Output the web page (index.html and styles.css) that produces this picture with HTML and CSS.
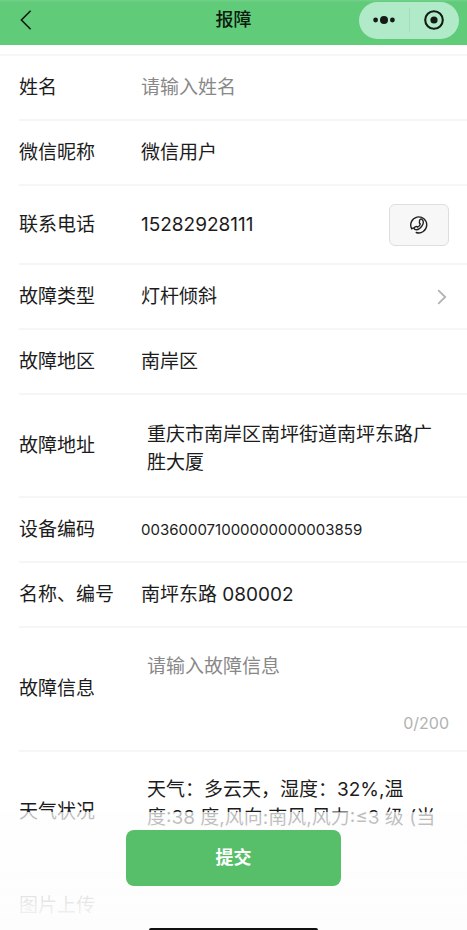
FILE: index.html
```html
<!DOCTYPE html>
<html lang="zh-CN">
<head>
<meta charset="utf-8">
<meta name="viewport" content="width=device-width, initial-scale=1">
<title>报障</title>
<link rel="stylesheet" href="styles.css">
</head>
<body>
<div class="screen">
  <header class="navbar">
    <button class="back" type="button" aria-label="返回">
      <svg width="12" height="20" viewBox="0 0 12 20" fill="none" stroke="#101a13" stroke-width="1.6"><path d="M10.600 .8 1.400 10l9.200 9.200"/></svg>
    </button>
    <h1 class="title">报障</h1>
    <div class="capsule">
      <button class="capsule-button" type="button" aria-label="更多">
        <svg width="24" height="10" viewBox="0 0 24 10" fill="#141a16"><circle cx="3.6" cy="5" r="2.4"/><circle cx="12" cy="5" r="4"/><circle cx="20.4" cy="5" r="2.4"/></svg>
      </button>
      <button class="capsule-button" type="button" aria-label="关闭">
        <svg width="20" height="20" viewBox="0 0 20 20"><circle cx="10" cy="10" r="8.8" fill="none" stroke="#141a16" stroke-width="2.1"/><circle cx="10" cy="10" r="3.6" fill="#141a16"/></svg>
      </button>
    </div>
  </header>

  <form class="form">
    <div class="row">
      <label class="label" for="name">姓名</label>
      <input class="field" id="name" type="text" placeholder="请输入姓名">
    </div>
    <div class="row">
      <label class="label" for="nick">微信昵称</label>
      <input class="field" id="nick" type="text" value="微信用户">
    </div>
    <div class="row row-phone">
      <label class="label" for="phone">联系电话</label>
      <input class="field" id="phone" type="tel" value="15282928111">
      <button class="call" type="button" aria-label="拨打电话">
        <svg width="18" height="18" viewBox="0 0 18 18" fill="none" stroke="#222" stroke-width="1.4" stroke-linecap="round" stroke-linejoin="round"><path d="M1.700 12.700A8 8 0 1 1 6.200 16.500"/><path d="M1.700 12.700 3.800 12"/><path d="M9.600 4.300c.2-1.200 1.600-1.700 2.500-.9 1.500 1.400 1.400 4.100-.1 6.500-1.700 2.700-4.300 4.200-6.600 3.700-1.300-.3-1.700-1.700-.7-2.400l1.200-.6c.7-.3 1.300 0 1.700.6 1.400-.6 2.400-1.900 2.700-3.400-.7-.2-1-.6-.9-1.300z"/></svg>
      </button>
    </div>
    <div class="row">
      <label class="label" for="type">故障类型</label>
      <select class="field" id="type"><option>灯杆倾斜</option></select>
      <svg class="chevron" width="10" height="16" viewBox="0 0 10 16" fill="none" stroke="#b2b2b2" stroke-width="1.8"><path d="M1.200 1.200 8.200 8l-7 6.800"/></svg>
    </div>
    <div class="row">
      <label class="label" for="area">故障地区</label>
      <input class="field" id="area" type="text" value="南岸区">
    </div>
    <div class="row row-address">
      <label class="label" for="address">故障地址</label>
      <textarea class="field area" id="address" rows="2">重庆市南岸区南坪街道南坪东路广胜大厦</textarea>
    </div>
    <div class="row">
      <label class="label" for="code">设备编码</label>
      <input class="field code" id="code" type="text" value="003600071000000000003859">
    </div>
    <div class="row">
      <label class="label" for="number">名称、编号</label>
      <input class="field" id="number" type="text" value="南坪东路 080002">
    </div>
    <div class="row row-info">
      <label class="label" for="info">故障信息</label>
      <div class="info">
        <textarea class="field area" id="info" rows="2" maxlength="200" placeholder="请输入故障信息"></textarea>
        <span class="count">0/200</span>
      </div>
    </div>
    <div class="row row-weather">
      <label class="label" for="weather">天气状况</label>
      <textarea class="field area" id="weather" rows="3">天气：多云天，湿度：32%,温度:38 度,风向:南风,风力:≤3 级 (当前)</textarea>
    </div>
    <div class="upload">
      <span class="upload-title">图片上传</span>
      <span class="upload-count">0/9</span>
    </div>
  </form>

  <footer class="footer">
    <button class="submit" type="submit">提交</button>
    <div class="home-bar"></div>
  </footer>
</div>
</body>
</html>
```
FILE: styles.css
```css
* {
  box-sizing: border-box;
}

body {
  margin: 0;
  background: #fff;
  color: #1c1c1c;
  font-family: Inter, "Noto Sans CJK SC", sans-serif;
  font-size: 19px;
  line-height: 28px;
}

button,
input,
select,
textarea {
  margin: 0;
  padding: 0;
  border: 0;
  background: none;
  color: inherit;
  font: inherit;
}

svg {
  display: block;
}

.screen {
  height: 100vh;
  overflow: hidden;
}

.navbar {
  display: grid;
  grid-template-columns: 1fr auto 1fr;
  align-items: center;
  height: 45px;
  padding: 0 8px 5px 20px;
  background: linear-gradient(#78d08d, #60cb79 2px);
}

.back {
  justify-self: start;
}

.title {
  margin: 0 0 0 -12px;
  color: #0c1a10;
  font-size: 18px;
  font-weight: 500;
}

.capsule {
  display: flex;
  justify-self: end;
  width: 100px;
  height: 37px;
  border-radius: 19px;
  background: #b0eac8;
}

.capsule-button {
  display: flex;
  flex: 1;
  align-items: center;
  justify-content: center;
}

.capsule-button + .capsule-button {
  background: linear-gradient(#a3dfbb, #a3dfbb) left center / 1px 24px no-repeat;
}

.form {
  margin-top: 9px;
  border-top: 2px solid #f6f6f6;
}

.row {
  display: flex;
  align-items: center;
  height: 65px;
  margin-left: 19px;
  padding-right: 18px;
  border-bottom: 2px solid #f6f6f6;
}

.label {
  flex: none;
  width: 122px;
}

.field {
  flex: 1;
  min-width: 0;
  height: 28px;
  outline: 0;
  appearance: none;
}

.field::placeholder {
  color: #888;
  opacity: 1;
}

.area {
  display: block;
  height: 62px;
  margin-left: 6px;
  padding-top: 6px;
  overflow: hidden;
  resize: none;
}

.code {
  font-size: 15px;
}

.row-phone {
  height: 79px;
}

.call {
  display: flex;
  align-items: center;
  justify-content: center;
  width: 60px;
  height: 42px;
  border: 1px solid #dedede;
  border-radius: 6px;
  background: #f7f7f7;
}

.chevron {
  margin-right: 2px;
}

.row-address {
  height: 103px;
}

.row-info {
  height: 124px;
}

.info {
  display: flex;
  flex: 1;
  flex-direction: column;
  padding-top: 6px;
}

.info .area {
  flex: none;
}

.count {
  align-self: flex-end;
  color: #b2b2b2;
  font-size: 16px;
}

.row-weather {
  height: 122px;
}

.row-weather .area {
  height: 84px;
}

.upload {
  display: flex;
  flex-direction: column;
  padding: 18px 19px;
}

.upload-count {
  color: #b2b2b2;
  font-size: 16px;
}

.footer {
  position: fixed;
  right: 0;
  bottom: 0;
  left: 0;
  display: flex;
  flex-direction: column;
  align-items: center;
  justify-content: space-between;
  height: 118px;
  padding-top: 18px;
  background: linear-gradient(rgba(253, 253, 253, 0.7), rgba(253, 253, 253, 0.9) 90px, #fdfdfd);
}

.submit {
  width: 46%;
  height: 56px;
  border-radius: 8px;
  background: #57bf6a;
  color: #fff;
  font-size: 18px;
  font-weight: 700;
}

.home-bar {
  width: 36%;
  height: 2px;
  border-radius: 2px 2px 0 0;
  background: #111;
}
```
